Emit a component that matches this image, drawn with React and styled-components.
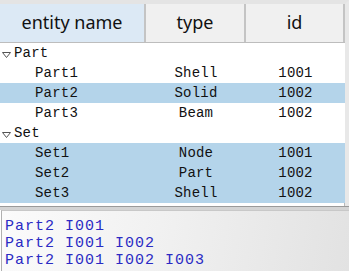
import React from 'react';
import styled, { createGlobalStyle } from 'styled-components';

const Global = createGlobalStyle`
  html, body { margin: 0; padding: 0; background: #fff; }
`;

const Page = styled.div`
  width: 349px;
  height: 271px;
  display: flex;
  flex-direction: column;
  overflow: hidden;
  background: #fff;
`;

const Table = styled.div`
  height: 206px;
  border-top: 4px solid #e4e4e4;
  border-right: 4px solid #e8e8e8;
  box-shadow: inset -1px 0 0 #b8b8b8;
  box-sizing: border-box;
  display: flex;
  flex-direction: column;
`;

const Grid = styled.div`
  display: grid;
  grid-template-columns: 146px 100px 99px;
`;

const Header = styled(Grid)`
  height: 38px;
  border-bottom: 1px solid #bdbdbd;
  box-sizing: content-box;
`;

const HeadCell = styled.div`
  display: flex;
  align-items: center;
  justify-content: center;
  font-family: "Noto Sans", "Open Sans", sans-serif;
  font-size: 18px;
  color: #111;
  background: ${(p) => (p.$active ? '#dce9f5' : '#f0f0f0')};
  border-right: 2px solid #c4c4c4;
  padding-bottom: 2px;
`;

const Row = styled(Grid)`
  height: 20px;
  background: ${(p) => (p.$selected ? '#b4d4ea' : '#fff')};
  font-family: "Liberation Mono", "DejaVu Sans Mono", monospace;
  font-size: 14px;
  letter-spacing: 0.2px;
  color: #111;
  line-height: 20px;
`;

const NameCell = styled.div`
  display: flex;
  align-items: center;
  padding-left: ${(p) => (p.$group ? '2px' : '35px')};
  white-space: pre;
`;

const Cell = styled.div`
  text-align: center;
`;

const Caret = styled.svg`
  width: 9px;
  height: 6px;
  margin-right: 3px;
  margin-top: 3px;
`;

const Divider = styled.div`
  height: 3px;
  border-top: 1px solid #9a9a9a;
  background: #d4d4d4;
`;

const Output = styled.div`
  flex: 1;
  margin-left: 1px;
  border-left: 1px solid #b0b0b0;
  border-top: 1px solid #c8c8c8;
  padding: 7px 0 0 3px;
  background: linear-gradient(100deg, #fbfbfb 0%, #f1f1f1 45%, #e2e2e2 100%);
  font-family: "Liberation Mono", "Courier New", monospace;
  font-size: 15px;
  letter-spacing: 1px;
  line-height: 17px;
  color: #2a2ac4;
  white-space: pre;
`;

const groups = [
  {
    name: 'Part',
    items: [
      ['Part1', 'Shell', '1001', false],
      ['Part2', 'Solid', '1002', true],
      ['Part3', 'Beam', '1002', false],
    ],
  },
  {
    name: 'Set',
    items: [
      ['Set1', 'Node', '1001', true],
      ['Set2', 'Part', '1002', true],
      ['Set3', 'Shell', '1002', true],
    ],
  },
];

const lines = ['Part2 I001', 'Part2 I001 I002', 'Part2 I001 I002 I003'];

export default function App() {
  return (
    <Page>
      <Global />
      <Table>
        <Header>
          <HeadCell $active>entity name</HeadCell>
          <HeadCell>type</HeadCell>
          <HeadCell>id</HeadCell>
        </Header>
        {groups.map((g) => (
          <React.Fragment key={g.name}>
            <Row>
              <NameCell $group>
                <Caret viewBox="0 0 9 6">
                  <path d="M0.5 0.5 H8.5 L4.5 5.5 Z" fill="none" stroke="#555" strokeWidth="1" />
                </Caret>
                {g.name}
              </NameCell>
              <Cell />
              <Cell />
            </Row>
            {g.items.map(([n, t, id, sel]) => (
              <Row key={n} $selected={sel}>
                <NameCell>{n}</NameCell>
                <Cell>{t}</Cell>
                <Cell>{id}</Cell>
              </Row>
            ))}
          </React.Fragment>
        ))}
      </Table>
      <Divider />
      <Output>
        {lines.map((l) => (
          <div key={l}>{l}</div>
        ))}
      </Output>
    </Page>
  );
}
